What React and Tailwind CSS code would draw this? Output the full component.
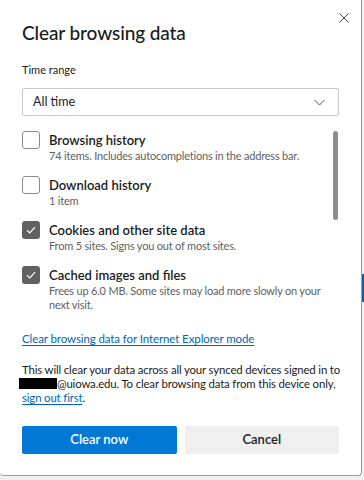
import { useState } from 'react';

const items = [
  { id: 'history', label: 'Browsing history', desc: '74 items. Includes autocompletions in the address bar.', checked: false },
  { id: 'downloads', label: 'Download history', desc: '1 item', checked: false },
  { id: 'cookies', label: 'Cookies and other site data', desc: 'From 5 sites. Signs you out of most sites.', checked: true },
  { id: 'cache', label: 'Cached images and files', desc: 'Frees up 6.0 MB. Some sites may load more slowly on your next visit.', checked: true },
];

function Checkbox({ checked, onClick }) {
  return (
    <button
      type="button"
      onClick={onClick}
      className={`flex h-[18px] w-[18px] shrink-0 items-center justify-center rounded-[3px] ${
        checked ? 'bg-[#616161]' : 'border border-[#8a8a8a] bg-white'
      }`}
    >
      {checked && (
        <svg width="12" height="12" viewBox="0 0 12 12" fill="none">
          <path d="M2 6.3 L4.8 9 L10 3.2" stroke="white" strokeWidth="1.2" />
        </svg>
      )}
    </button>
  );
}

export default function App() {
  const [checked, setChecked] = useState(Object.fromEntries(items.map((i) => [i.id, i.checked])));

  return (
    <div className="flex h-[480px] w-[364px] overflow-hidden bg-[#f0f0f0] font-['Segoe_UI','Lato',sans-serif] text-[#1b1b1b]">
      <div className="relative flex h-[476px] w-[362px] shrink-0 flex-col rounded-b-[4px] border-r border-b border-[#9c9c9c] bg-white px-[22px]">
        <button type="button" className="absolute right-[12px] top-[13px] text-[#444]">
          <svg width="10" height="10" viewBox="0 0 10 10" fill="none">
            <path d="M0.5 0.5 L9.5 9.5 M9.5 0.5 L0.5 9.5" stroke="currentColor" strokeWidth="1" />
          </svg>
        </button>

        <h1 className="mt-[21px] text-[19px] font-medium leading-[24px] tracking-[-0.1px]">Clear browsing data</h1>

        <p className="mt-[17px] text-[11px] leading-[16px]">Time range</p>
        <div className="mt-[10px] flex h-[28px] items-center justify-between rounded-[2px] border border-[#c8c8c8] pl-[10px] pr-[13px]">
          <span className="text-[12.5px]">All time</span>
          <svg width="11" height="7" viewBox="0 0 11 7" fill="none">
            <path d="M0.5 1 L5.5 6 L10.5 1" stroke="#555" strokeWidth="1" />
          </svg>
        </div>

        <div className="relative mt-[15px] flex flex-col gap-[13px]">
          <div className="absolute right-[1px] top-0 h-[89px] w-[5px] rounded-full bg-[#8e8e8e]" />
          {items.map((item) => (
            <div key={item.id} className="flex gap-[9px]">
              <Checkbox
                checked={checked[item.id]}
                onClick={() => setChecked({ ...checked, [item.id]: !checked[item.id] })}
              />
              <div>
                <p className="text-[13px] font-semibold leading-[18px]">{item.label}</p>
                <p className="text-[11px] leading-[14px] tracking-[-0.2px] text-[#616161]">{item.desc}</p>
              </div>
            </div>
          ))}
        </div>

        <a href="#" className="mt-[19px] self-start text-[11.5px] leading-[16px] tracking-[-0.1px] text-[#0066b4] underline underline-offset-2">
          Clear browsing data for Internet Explorer mode
        </a>

        <div className="mt-[16px] text-[11.4px] leading-[14px] tracking-[-0.15px]">
          <p className="whitespace-nowrap">This will clear your data across all your synced devices signed in to</p>
          <p className="whitespace-nowrap">
            <span className="ml-[-3px] inline-block h-[11px] w-[38px] bg-black align-[-1px]" />@uiowa.edu. To clear
            browsing data from this device only,
          </p>
          <p>
            <a href="#" className="text-[#0066b4] underline underline-offset-2">sign out first</a>.
          </p>
        </div>

        <div className="mt-[21px] flex gap-[8px]">
          <button type="button" className="h-[28px] flex-1 rounded-[2px] bg-[#0078d4] text-[13px] font-semibold text-white">
            Clear now
          </button>
          <button type="button" className="h-[28px] flex-1 rounded-[2px] bg-[#efefef] text-[13px] font-semibold text-[#1b1b1b]">
            Cancel
          </button>
        </div>
      </div>
      <div className="flex flex-1 flex-col">
        <div className="mt-[274px] h-[28px] bg-[#1e5ba8]" />
      </div>
    </div>
  );
}
